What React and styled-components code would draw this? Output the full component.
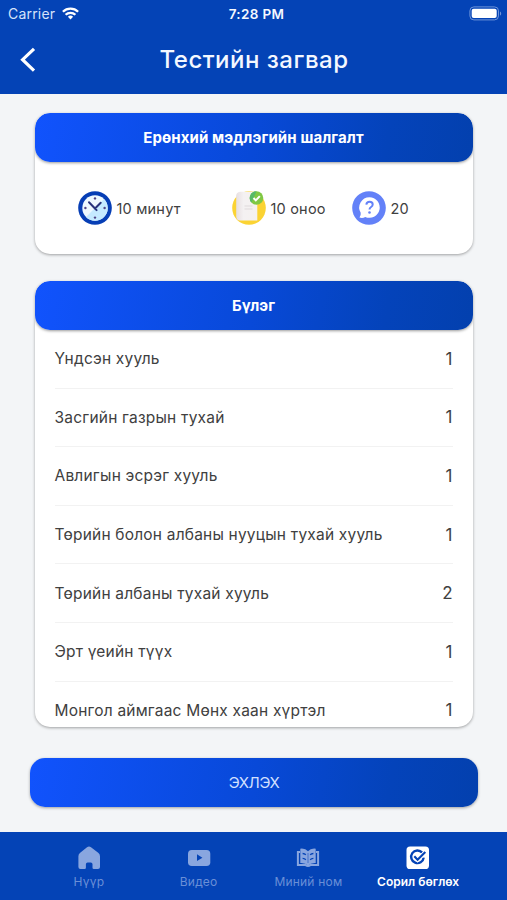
import React from 'react';
import styled, { createGlobalStyle } from 'styled-components';

const GlobalStyle = createGlobalStyle`
  * {
    box-sizing: border-box;
  }
  body {
    margin: 0;
    background-color: #f3f5f7;
    font-family: Inter, "Liberation Sans", sans-serif;
    color: #404040;
  }
`;

const Screen = styled.div`
  height: 900px;
  display: flex;
  flex-direction: column;
  overflow: hidden;
`;

const Header = styled.header`
  height: 94px;
  background-color: #0443b6;
  color: #f4f8ff;
`;

const StatusBar = styled.div`
  height: 27px;
  padding: 0 5px 0 8px;
  display: grid;
  grid-template-columns: 1fr auto 1fr;
  align-items: center;
  font-size: 14px;
`;

const Carrier = styled.div`
  display: flex;
  align-items: center;
  gap: 7px;
  color: #d5e2fa;
  letter-spacing: 0.2px;
`;

const Clock = styled.div`
  padding-left: 3px;
  font-size: 13.5px;
  font-weight: 600;
  letter-spacing: 0.35px;
`;

const Battery = styled.div`
  display: flex;
  justify-content: flex-end;
`;

const TitleBar = styled.div`
  height: 66px;
  display: grid;
  grid-template-columns: 56px 1fr 56px;
  align-items: center;
`;

const BackButton = styled.button`
  padding: 0 0 0 20px;
  border: none;
  background: none;
  display: flex;
`;

const Title = styled.h1`
  margin: 0;
  padding-left: 1px;
  text-align: center;
  font-size: 24px;
  line-height: 30px;
  font-weight: 500;
  letter-spacing: 0.5px;
  white-space: nowrap;
`;

const Content = styled.main`
  flex: 1;
  padding: 19px 30px 0;
`;

const Card = styled.section`
  height: ${(props) => props.$height}px;
  margin: 0 4.5px 27px;
  background-color: #fff;
  border-radius: 15px;
  box-shadow: 0 1px 3px rgba(0, 0, 0, 0.35);
  overflow: hidden;
`;

const CardHeader = styled.h2`
  height: 49px;
  margin: 0;
  display: flex;
  align-items: center;
  justify-content: center;
  border-radius: 15px;
  background: linear-gradient(100deg, #1153fd 0%, #0849d8 50%, #0443ba 80%, #0340ae 100%);
  box-shadow: 0 1px 3px rgba(0, 0, 0, 0.4);
  color: #fff;
  font-size: 15px;
  font-weight: 700;
  letter-spacing: 0.1px;
`;

const Summary = styled.div`
  height: 92px;
  padding-left: 43.5px;
  display: grid;
  grid-template-columns: 154px 120px auto;
  align-items: center;
`;

const SummaryItem = styled.div`
  display: flex;
  align-items: center;
  gap: 4.5px;
  font-size: 14.5px;
  letter-spacing: 0.2px;
  white-space: nowrap;
`;

const Row = styled.div`
  height: 58.6px;
  margin: 0 20px;
  display: flex;
  align-items: center;
  justify-content: space-between;
  border-bottom: 1px solid #f2f2f2;
  font-size: 15.5px;
  letter-spacing: 0.2px;
  white-space: nowrap;
`;

const Count = styled.span`
  font-size: 17px;
  letter-spacing: 0;
`;

const StartButton = styled.button`
  width: 448px;
  height: 49px;
  margin-top: 4px;
  padding: 0;
  border: none;
  border-radius: 15px;
  background: linear-gradient(100deg, #1153fd 0%, #0849d8 50%, #0443ba 80%, #0340ae 100%);
  box-shadow: 0 1px 3px rgba(0, 0, 0, 0.35);
  color: #d3e0ff;
  font-family: inherit;
  font-size: 15px;
  letter-spacing: -0.4px;
`;

const TabBar = styled.nav`
  height: 68px;
  padding: 0 34px;
  display: grid;
  grid-template-columns: repeat(4, 1fr);
  background-color: #0443b6;
`;

const Tab = styled.div`
  padding-top: 13px;
  display: flex;
  flex-direction: column;
  align-items: center;
  gap: 3px;
  color: ${(props) => (props.$active ? '#fff' : '#89a6df')};
  font-size: 12px;
  line-height: 16px;
  font-weight: ${(props) => (props.$active ? 600 : 400)};
  letter-spacing: ${(props) => (props.$active ? 0 : 0.2)}px;
  white-space: nowrap;

  span {
    color: ${(props) => (props.$active ? '#fff' : '#6a8fd6')};
  }
`;

const WifiIcon = () => (
  <svg width="17" height="13" viewBox="0 0 17 13" fill="none" stroke="#fff" strokeWidth="2.3">
    <path d="M0.9 4.8a10.8 10.8 0 0 1 15.2 0" />
    <path d="M3.6 7.8a7 7 0 0 1 9.8 0" />
    <path d="M8.5 12.4 5.9 9.8a3.7 3.7 0 0 1 5.2 0z" fill="#fff" stroke="none" />
  </svg>
);

const BatteryIcon = () => (
  <svg width="33" height="15" viewBox="0 0 33 15">
    <rect x="0.9" y="0.9" width="28.6" height="13" rx="4" fill="none" stroke="#6f94d9" />
    <rect x="2.7" y="2.7" width="25" height="9.4" rx="2" fill="#fff" />
    <path d="M31 5.4c1.6 0.6 1.6 3.6 0 4.2z" fill="#6f94d9" />
  </svg>
);

const TimeIcon = () => (
  <svg width="34" height="34" viewBox="0 0 34 34">
    <circle cx="17" cy="17" r="16.8" fill="#063eb5" />
    <circle cx="17" cy="17" r="12.7" fill="#eef9ff" />
    <path d="M26 8A12.7 12.7 0 0 1 8 26z" fill="#c5eaff" />
    <path d="M11 11.2l6 6.3 5.7-5.7M17 17.5l1.6 1.6" fill="none" stroke="#29347c" strokeWidth="2" strokeLinecap="round" />
    <g fill="#514585">
      <circle cx="17" cy="7.4" r="1.2" />
      <circle cx="26.6" cy="17" r="1.2" />
      <circle cx="17" cy="26.6" r="1.2" />
      <circle cx="7.4" cy="17" r="1.2" />
    </g>
  </svg>
);

const ScoreIcon = () => (
  <svg width="34" height="34" viewBox="0 0 34 34">
    <defs>
      <linearGradient id="paper">
        <stop offset="0" stopColor="#e7dfe1" />
        <stop offset="0.35" stopColor="#f4f1f2" />
        <stop offset="1" stopColor="#f5f1f0" />
      </linearGradient>
    </defs>
    <circle cx="17" cy="17" r="16.8" fill="#fbd333" />
    <path d="M4.2 4.5Q4.5 1.5 8 0.8h15q2.3 0 2.3 3v25.700H8q-3.6 0-3.800-4z" fill="url(#paper)" />
    <path d="M12.5 15h8M12.5 18h8" stroke="#dfd9db" strokeWidth="1" />
    <circle cx="24.5" cy="7" r="6.8" fill="#80c844" />
    <path d="M24.5 0.2a6.8 6.8 0 0 0-5 11.4z" fill="#58ba68" />
    <path d="M21.5 7l2.3 2.4 4-4.3" fill="none" stroke="#fff" strokeWidth="2" />
  </svg>
);

const QuestionIcon = () => (
  <svg width="34" height="34" viewBox="0 0 34 34">
    <circle cx="17" cy="17" r="16.8" fill="#6381f8" />
    <path d="M17.5 6.2a10.3 10.3 0 1 1-4.3 19.7Q11 27.4 7.5 26.6q1.6-1.8 1.2-4.8A10.3 10.3 0 0 1 17.5 6.2z" fill="#fff" />
    <path d="M14.300 13.600q0.400-2.800 3.300-2.800 3.100 0 3.100 2.700 0 1.500-1.600 2.500-1.600 1-1.600 2.600" fill="none" stroke="#6381f8" strokeWidth="2" />
    <circle cx="17.500" cy="21.500" r="1.300" fill="#6381f8" />
  </svg>
);

const HomeIcon = () => (
  <svg width="26" height="26" viewBox="0 0 26 26" fill="currentColor">
    <path d="M11 2.2q2-1.5 4 0l7.2 5.6Q24 9.2 24 11.2V22q0 2-2 2h-4.2q-1.3 0-1.3-1.3v-3.5q0-1.7-1.7-1.7h-3.2q-1.7 0-1.7 1.7v3.5Q9.9 24 8.6 24H4.4q-2 0-2-2V11.2q0-2 1.8-3.4z" />
  </svg>
);

const VideoIcon = () => (
  <svg width="26" height="26" viewBox="0 0 26 26">
    <rect x="2" y="5" width="22.3" height="16" rx="3.8" fill="currentColor" />
    <path d="M11 9.3v6.8l5.4-3.4z" fill="#0443b6" />
  </svg>
);

const BookIcon = () => (
  <svg width="26" height="26" viewBox="0 0 26 26">
    <path d="M5 7H2.900v13.100h7.800q2.300 1.800 4.600 0h7.800V7H21" fill="none" stroke="currentColor" strokeWidth="2" />
    <path d="M5.300 3.700q5-0.600 7.700 2.500 2.700-3.100 7.700-2.500v14.200q-5.200-0.200-7.700 2.500-2.500-2.700-7.700-2.500z" fill="currentColor" />
    <path d="M13 8v10" fill="none" stroke="#3565c4" strokeWidth="0.800" />
    <path d="M7.600 8.500q2 0 3.200 1.300M7.600 13.400q2 0 3.200 1.300M18.400 8.500q-2 0-3.200 1.300M18.400 13.400q-2 0-3.200 1.300" fill="none" stroke="#0443b6" strokeWidth="1.400" />
  </svg>
);

const QuizIcon = () => (
  <svg width="26" height="26" viewBox="0 0 26 26">
    <rect x="1.5" y="1.5" width="22.5" height="22.5" rx="3.6" fill="#fff" />
    <path d="M17.2 7.6a6.3 6.3 0 1 0 1.5 5" fill="none" stroke="#0443b6" strokeWidth="2.4" />
    <path d="M9.3 11.6l3.3 3.3 7.6-7.7" fill="none" stroke="#fff" strokeWidth="4" />
    <path d="M9.3 11.3l3.3 3.5 7.7-7.7" fill="none" stroke="#0443b6" strokeWidth="2.1" />
  </svg>
);

const summary = [
  { icon: <TimeIcon />, label: '10 минут' },
  { icon: <ScoreIcon />, label: '10 оноо' },
  { icon: <QuestionIcon />, label: '20' },
];

const chapters = [
  { name: 'Үндсэн хууль', count: 1 },
  { name: 'Засгийн газрын тухай', count: 1 },
  { name: 'Авлигын эсрэг хууль', count: 1 },
  { name: 'Төрийн болон албаны нууцын тухай хууль', count: 1 },
  { name: 'Төрийн албаны тухай хууль', count: 2 },
  { name: 'Эрт үеийн түүх', count: 1 },
  { name: 'Монгол аймгаас Мөнх хаан хүртэл', count: 1 },
];

const tabs = [
  { icon: <HomeIcon />, label: 'Нүүр' },
  { icon: <VideoIcon />, label: 'Видео' },
  { icon: <BookIcon />, label: 'Миний ном' },
  { icon: <QuizIcon />, label: 'Сорил бөглөх', active: true },
];

const App = () => {
  return (
    <Screen>
      <GlobalStyle />
      <Header>
        <StatusBar>
          <Carrier>
            Carrier
            <WifiIcon />
          </Carrier>
          <Clock>7:28 PM</Clock>
          <Battery>
            <BatteryIcon />
          </Battery>
        </StatusBar>
        <TitleBar>
          <BackButton aria-label="Буцах">
            <svg width="16" height="26" viewBox="0 0 16 26" fill="none" stroke="#fff" strokeWidth="3.2">
              <path d="M14 1.8 2.6 12.7 14 23.6" />
            </svg>
          </BackButton>
          <Title>Тестийн загвар</Title>
        </TitleBar>
      </Header>

      <Content>
        <Card $height={141}>
          <CardHeader>Ерөнхий мэдлэгийн шалгалт</CardHeader>
          <Summary>
            {summary.map((item) => (
              <SummaryItem key={item.label}>
                {item.icon}
                {item.label}
              </SummaryItem>
            ))}
          </Summary>
        </Card>

        <Card $height={446}>
          <CardHeader>Бүлэг</CardHeader>
          {chapters.map((chapter) => (
            <Row key={chapter.name}>
              {chapter.name}
              <Count>{chapter.count}</Count>
            </Row>
          ))}
        </Card>

        <StartButton>ЭХЛЭХ</StartButton>
      </Content>

      <TabBar>
        {tabs.map((tab) => (
          <Tab key={tab.label} $active={tab.active}>
            {tab.icon}
            <span>{tab.label}</span>
          </Tab>
        ))}
      </TabBar>
    </Screen>
  );
};

export default App;
